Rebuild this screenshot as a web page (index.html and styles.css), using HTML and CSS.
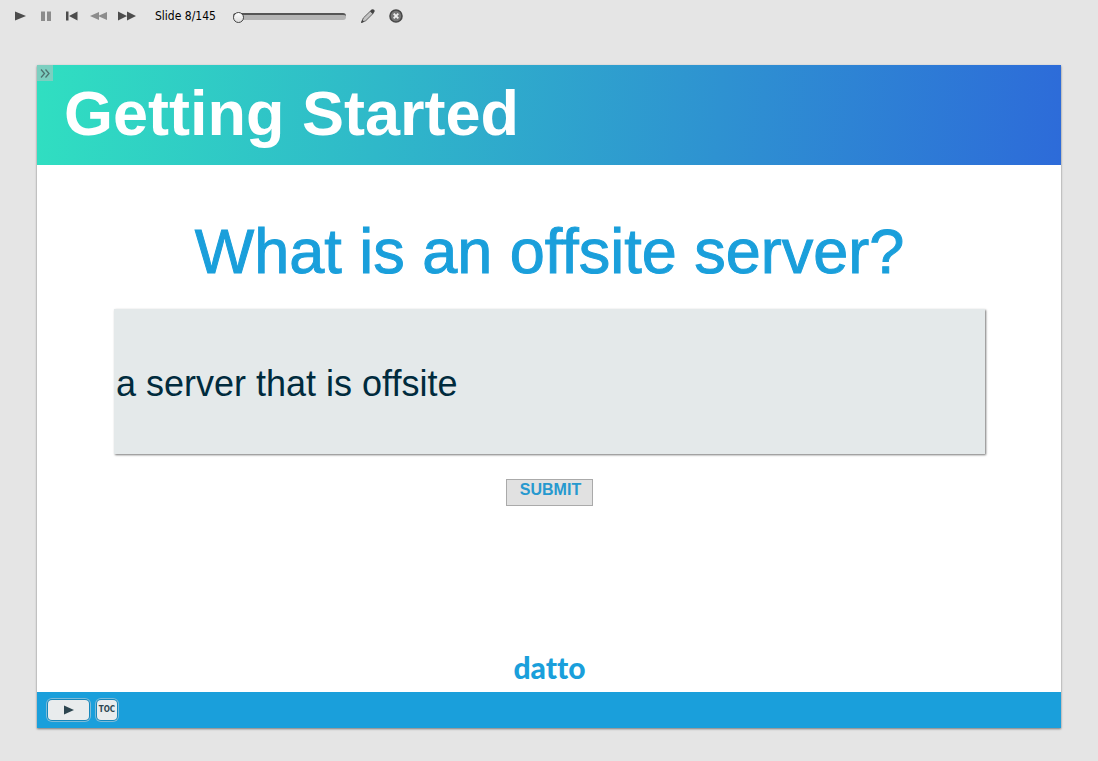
FILE: index.html
```html
<!DOCTYPE html>
<html lang="en">
<head>
<meta charset="utf-8">
<meta name="viewport" content="width=device-width, initial-scale=1">
<title>Getting Started</title>
<link rel="stylesheet" href="styles.css">
</head>
<body>
<div class="player">
  <nav class="toolbar" aria-label="Preview controls">
    <button class="tool" type="button" aria-label="Play"><svg width="18" height="14" viewBox="0 0 18 14"><path d="M4 2.500L15 7L4 11.500Z"/></svg></button>
    <button class="tool dim" type="button" aria-label="Pause"><svg width="18" height="14" viewBox="0 0 18 14"><path d="M4 2.500H8V12H4ZM10 2.500H14V12H10Z"/></svg></button>
    <button class="tool" type="button" aria-label="First slide"><svg width="18" height="14" viewBox="0 0 18 14"><path d="M3 2.500H5.500V11.500H3ZM14.500 2.500V11.500L6 7Z"/></svg></button>
    <button class="tool dim" type="button" aria-label="Previous slide"><svg width="20" height="14" viewBox="0 0 20 14"><path d="M10 3V11L1 7ZM18 3V11L9 7Z"/></svg></button>
    <button class="tool" type="button" aria-label="Next slide"><svg width="20" height="14" viewBox="0 0 20 14"><path d="M1 2.500V11.500L10 7ZM10 2.500V11.500L19 7Z"/></svg></button>
    <label class="slide-label" for="seek">Slide 8/145</label>
    <input class="seek" id="seek" type="range" min="0" max="145" value="0">
    <button class="tool tool-edit" type="button" aria-label="Edit"><svg width="16" height="16" viewBox="0 0 16 16"><path d="M1.500 14.500L3.300 10L10.500 3L13 5.500L5.800 12.700Z" fill="#c4c4c4" stroke="#555" stroke-width=".9"/><path d="M10 3.200L11.500 1.600Q13 .6 14.400 2Q15.200 3.300 14 4.600L12.800 6Z" fill="#444"/><path d="M1 15L2.200 11.700L4.300 13.800Z" fill="#444"/></svg></button>
    <button class="tool" type="button" aria-label="Close"><svg width="16" height="16" viewBox="0 0 16 16"><circle cx="8" cy="8" r="6" fill="#777" stroke="#484848" stroke-width="1.600"/><path d="M5.700 5.700L10.300 10.300M10.300 5.700L5.700 10.300" stroke="#eee" stroke-width="1.900"/></svg></button>
  </nav>

  <main class="stage">
    <header class="banner">
      <button class="expand" type="button" aria-label="Expand contents"><svg width="16" height="16" viewBox="0 0 16 16"><path d="M4 4.500L7.500 8.500L4 12.500M8.500 4.500L12 8.500L8.500 12.500" fill="none" stroke="#4d7370" stroke-width="1.300"/></svg></button>
      <h1 class="title">Getting Started</h1>
    </header>
    <form class="quiz">
      <label class="question" for="answer">What is an offsite server?</label>
      <input class="answer" id="answer" type="text" value="a server that is offsite">
      <button class="submit" type="button">SUBMIT</button>
      <div class="logo">datto</div>
    </form>
    <footer class="playbar">
      <button class="bar-button bar-play" type="button" aria-label="Play slide"><svg width="12" height="10" viewBox="0 0 12 10"><path d="M1 .5L11 5L1 9.500Z"/></svg></button>
      <button class="bar-button bar-toc" type="button">TOC</button>
    </footer>
  </main>
</div>
</body>
</html>
```
FILE: styles.css
```css
* {
  box-sizing: border-box;
}

body {
  margin: 0;
  background: #e5e5e5;
  font-family: "Liberation Sans", Arial, sans-serif;
}

button {
  padding: 0;
  border: 0;
  background: none;
  font: inherit;
}

.player {
  display: flex;
  flex-direction: column;
  min-height: 100vh;
  padding: 0 37px 33px;
}

.toolbar {
  display: flex;
  align-items: center;
  height: 32px;
  margin: 0 -26px 33px;
}

.tool {
  display: flex;
  margin-right: 8px;
  fill: #4c4c4c;
}

.dim {
  fill: #8c8c8c;
}

.slide-label {
  margin-left: 10px;
  color: #000;
  font: 12px/16px "DejaVu Sans Condensed", "Noto Sans", sans-serif;
  white-space: nowrap;
}

.seek {
  width: 113px;
  height: 10px;
  margin: 0 14px 0 17px;
  appearance: none;
  background: none;
}

.seek::-webkit-slider-runnable-track {
  height: 7px;
  border-top: 2px solid #555;
  border-radius: 3px;
  background: #b4b4b4;
}

.seek::-webkit-slider-thumb {
  width: 11px;
  height: 11px;
  margin-top: -3px;
  appearance: none;
  border: 1px solid #444;
  border-radius: 50%;
  background: linear-gradient(#fff, #ddd);
}

.tool-edit {
  margin-right: 12px;
}

.stage {
  display: flex;
  flex: 1;
  flex-direction: column;
  background: #fff;
  box-shadow: 0 1px 2px #777;
}

.banner {
  position: relative;
  height: 100px;
  padding: 12px 27px;
  background: linear-gradient(95deg, #30dfc1, #2d6bd9);
}

.expand {
  position: absolute;
  top: 0;
  left: 0;
  display: flex;
  background: #7ccfc0;
}

.title {
  margin: 0;
  color: #fff;
  font-size: 63px;
  line-height: 72px;
}

.quiz {
  display: flex;
  flex: 1;
  flex-direction: column;
  align-items: center;
  padding: 48px 76px 8px 77px;
}

.question {
  color: #1a9fdb;
  font-size: 63px;
  line-height: 76px;
  text-align: center;
  -webkit-text-stroke: 1px #1a9fdb;
}

.answer {
  width: 100%;
  height: 145px;
  margin-top: 20px;
  padding: 4px 2px 0;
  border: 0;
  border-radius: 0;
  background: #e4e9ea;
  box-shadow: 1px 1px 2px #777;
  color: #002b3d;
  font: 36px "Liberation Sans", Arial, sans-serif;
}

.submit {
  width: 87px;
  height: 27px;
  margin-top: 25px;
  padding: 0 0 5px 2px;
  border: 1px solid #aaa;
  background: #e1e1e1;
  color: #2799cf;
  font-size: 16px;
  font-weight: bold;
  line-height: 20px;
}

.logo {
  margin-top: auto;
  padding-bottom: 1px;
  color: #1a9fdb;
  font: 900 30px/32px Lato, sans-serif;
  font-variant-ligatures: none;
}

.playbar {
  display: flex;
  align-items: center;
  gap: 8px;
  height: 36px;
  padding: 0 11px 1px;
  background: #1a9fdb;
}

.bar-button {
  display: flex;
  align-items: center;
  justify-content: center;
  height: 20px;
  border-radius: 4px;
  background: #e9eced;
  box-shadow: 0 0 0 1px #1687bb, 0 0 0 2px #7dbbd8;
  color: #2d4650;
}

.bar-play {
  width: 41px;
  fill: #2d4650;
}

.bar-toc {
  width: 20px;
  font: bold 8px/10px "DejaVu Sans Condensed", sans-serif;
}
```
